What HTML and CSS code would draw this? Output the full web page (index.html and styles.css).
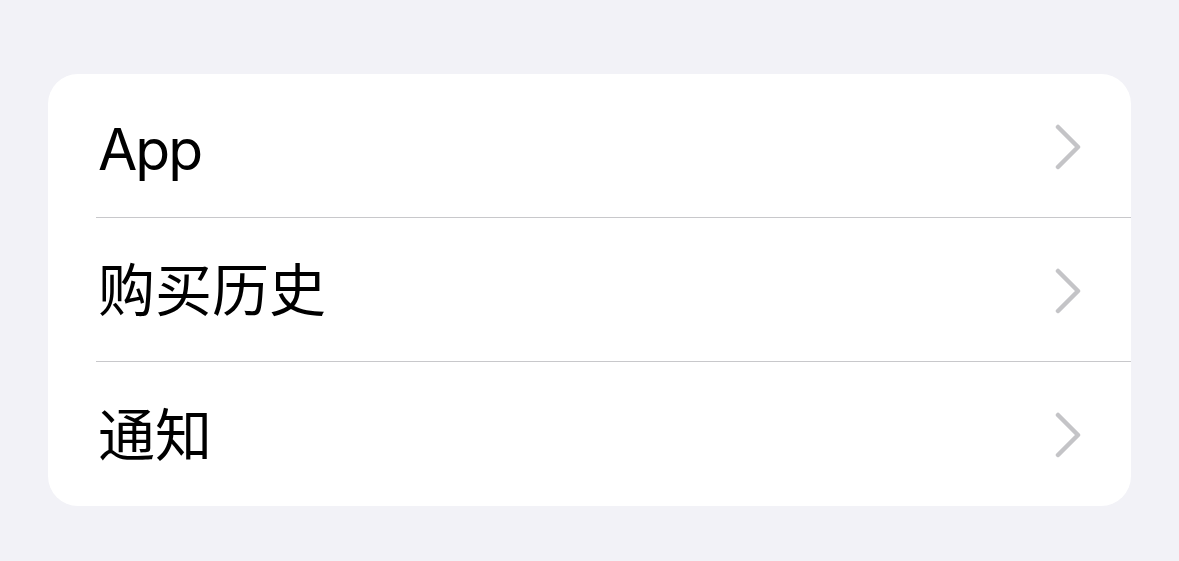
FILE: index.html
```html
<!DOCTYPE html>
<html>

<head>
    <title>设置</title>
    <link rel="stylesheet" href="styles.css">
</head>

<body>
    <div class="group">
        <div class="row">
            <div class="row-inner">
                <span class="label latin">App</span>
                <svg class="chevron" width="26" height="46" viewBox="0 0 26 46">
                    <polyline points="3,3 23,23 3,43" />
                </svg>
            </div>
        </div>
        <div class="row">
            <div class="row-inner">
                <span class="label">购买历史</span>
                <svg class="chevron" width="26" height="46" viewBox="0 0 26 46">
                    <polyline points="3,3 23,23 3,43" />
                </svg>
            </div>
        </div>
        <div class="row">
            <div class="row-inner">
                <span class="label">通知</span>
                <svg class="chevron" width="26" height="46" viewBox="0 0 26 46">
                    <polyline points="3,3 23,23 3,43" />
                </svg>
            </div>
        </div>
    </div>
</body>
</html>
```

FILE: styles.css
```css
html {
    height: 100%;
    background-color: #f2f2f7;
}

body {
    margin: 0;
    padding: 74px 48px 0 48px;
    font-family: Inter, "Noto Sans CJK SC", sans-serif;
    color: #000;
}

.group {
    background-color: #fff;
    border-radius: 30px;
    overflow: hidden;
}

.row {
    padding-left: 48px;
}

.row-inner {
    height: 143px;
    display: flex;
    align-items: center;
    justify-content: space-between;
    padding-left: 2px;
    padding-right: 50px;
    border-bottom: 1px solid #c8c8cb;
}

.row:last-child .row-inner {
    border-bottom: none;
    height: 144px;
}

.label {
    font-size: 57px;
    line-height: 1;
    padding-top: 2px;
}

.latin {
    letter-spacing: -2px;
    padding-top: 8px;
}

.chevron {
    display: block;
    margin-top: 2px;
}

.chevron polyline {
    fill: none;
    stroke: #c4c4c7;
    stroke-width: 4.5;
    stroke-linecap: round;
    stroke-linejoin: round;
}
```
